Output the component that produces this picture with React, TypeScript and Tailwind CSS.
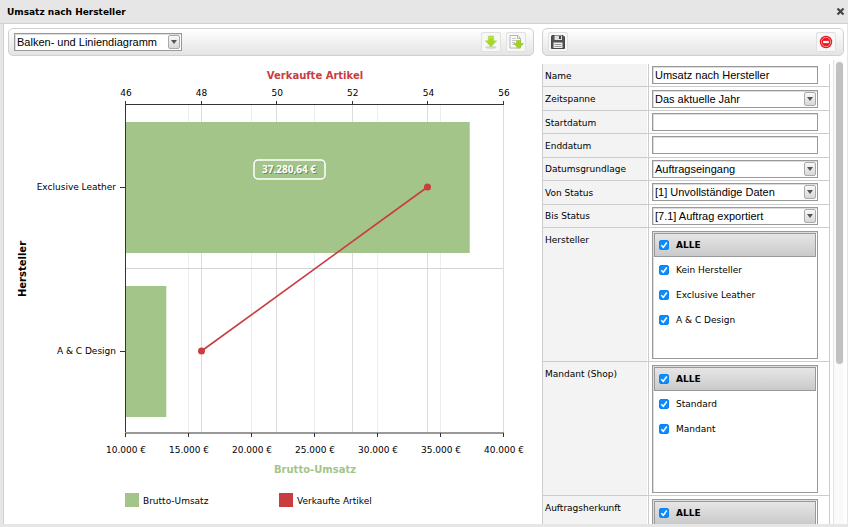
import { useState, type ReactNode } from 'react';

const SANS = "font-['DejaVu_Sans','Verdana',sans-serif]";
const FIELD =
  "w-full h-[18px] appearance-none rounded-none border border-[#999] bg-white px-[2px] py-0 text-[11px] leading-4 text-black font-['Liberation_Sans','Arial',sans-serif] shadow-[inset_1px_1px_0_#ddd] outline-none";

function SelectBox({ id, label, options }: { id: string; label?: string; options: string[] }) {
  return (
    <div className="relative flex w-full items-center">
      <select id={id} aria-label={label} className={FIELD}>
        {options.map((o) => (
          <option key={o}>{o}</option>
        ))}
      </select>
      <span className="pointer-events-none absolute right-[2px] flex h-[14px] w-[12px] items-center justify-center rounded-[2px] border border-[#aaa] bg-linear-to-b from-[#f8f8f8] to-[#d8d8d8]">
        <svg width="6" height="4" viewBox="0 0 6 4">
          <path d="M0 0h6L3 4z" fill="#555" />
        </svg>
      </span>
    </div>
  );
}

function ToolButton({ label, children }: { label: string; children: ReactNode }) {
  return (
    <button
      type="button"
      aria-label={label}
      className="flex size-5 items-center justify-center rounded-[2px] border border-[#e0e0e0] bg-[#f7f7f7]"
    >
      {children}
    </button>
  );
}

function Toolbar({ children }: { children: ReactNode }) {
  return (
    <div className="flex h-7 shrink-0 items-center rounded-[5px] border border-[#d0d0d0] bg-linear-to-b from-white to-[#e4e4e4] px-[5px]">
      {children}
    </div>
  );
}

function DownloadIcon() {
  return (
    <svg width="14" height="16" viewBox="0 0 14 16">
      <ellipse cx="7" cy="13.4" rx="5.5" ry="1.4" fill="#d4d4d4" />
      <path d="M4.300 2h5.400v4.800h3.100L7 12.800 1.200 6.800h3.100z" fill="#a6d724" stroke="#b4dc52" strokeWidth=".6" strokeLinejoin="round" />
      <path d="M4.800 2.500h4.400v2H4.800z" fill="#c3e858" opacity=".7" />
    </svg>
  );
}

function ExportIcon() {
  return (
    <svg width="16" height="16" viewBox="0 0 16 16">
      <path d="M2 1.500h8l2.500 3v9.500H2z" fill="#fafafa" stroke="#b4b4b4" />
      <path d="M9.500 1.500v3h3" fill="none" stroke="#b4b4b4" />
      <path d="M4 4.500h4M4 6.500h4M4 8.500h3M4 10.500h3" stroke="#c8c8c8" />
      <path d="M8.500 6.500h4v3h3L10.500 14.500 5.800 9.500h2.700z" fill="#a0d41e" stroke="#8cc41c" strokeWidth=".6" />
    </svg>
  );
}

function SaveIcon() {
  return (
    <svg width="16" height="16" viewBox="0 0 16 16">
      <path d="M2 1.500h11l1.500 1.500v11.500H1.500V2z" fill="#505055" stroke="#47474b" strokeLinejoin="round" />
      <path d="M4.500 1.500h7.500v4.500H4.500z" fill="#dedede" />
      <path d="M9 2h2v3H9z" fill="#444" />
      <path d="M3.500 8.500h9v5.500h-9z" fill="#efefef" />
      <path d="M4.500 10.500h7M4.500 12.500h7" stroke="#999" />
    </svg>
  );
}

function RemoveIcon() {
  return (
    <svg width="14" height="14" viewBox="0 0 14 14">
      <circle cx="7" cy="7" r="6.200" fill="#e3121c" />
      <circle cx="7" cy="7" r="4.700" fill="#f01822" stroke="#ffb5b5" strokeWidth=".8" />
      <rect x="4.200" y="5.900" width="5.600" height="2.200" fill="#fff" />
    </svg>
  );
}

const PLOT = { left: 117, right: 495, top: 48, bottom: 376 };
const CATEGORIES = [
  { name: 'Exclusive Leather', revenue: 37280.64, sold: 54 },
  { name: 'A & C Design', revenue: 13200, sold: 48 },
];
const REVENUE_TICKS = [10000, 15000, 20000, 25000, 30000, 35000, 40000];
const SOLD_TICKS = [46, 48, 50, 52, 54, 56];
const plotWidth = PLOT.right - PLOT.left;
const revenueX = (v: number) => PLOT.left + ((v - 10000) / 30000) * plotWidth;
const soldX = (v: number) => PLOT.left + ((v - 46) / 10) * plotWidth;
const band = (PLOT.bottom - PLOT.top) / 2;
const centerY = (i: number) => PLOT.top + 1 + band * (i + 0.5);
const snap = (v: number) => Math.round(v) + 0.5;
const euro = (v: number) => `${v / 1000}.000 €`;

function Chart() {
  return (
    <svg
      viewBox="0 0 526 466"
      role="img"
      aria-label="Umsatz nach Hersteller"
      className="w-full font-['DejaVu_Sans','Verdana',sans-serif] text-[9px]"
    >
      {REVENUE_TICKS.slice(1).map((t) => (
        <path key={t} d={`M${snap(revenueX(t))} ${PLOT.top}V${PLOT.bottom}`} stroke="#ededed" />
      ))}
      {SOLD_TICKS.slice(1).map((t) => (
        <path key={t} d={`M${snap(soldX(t))} ${PLOT.top}V${PLOT.bottom}`} stroke="#dcdcdc" />
      ))}
      <path d={`M${PLOT.left} ${snap(PLOT.top + band)}H${PLOT.right}`} stroke="#d4d4d4" />
      {CATEGORIES.map((c, i) => (
        <g key={c.name}>
          <rect
            x={PLOT.left}
            y={centerY(i) - 65}
            width={revenueX(c.revenue) - PLOT.left + 1}
            height="131"
            fill="#a4c58a"
          />
          <path d={`M${PLOT.left - 5} ${snap(centerY(i))}h5`} stroke="#333" />
          <text x="108" y={centerY(i) + 3} textAnchor="end">
            {c.name}
          </text>
        </g>
      ))}
      <path d={`M${PLOT.left + 0.5} ${PLOT.top}V${PLOT.bottom}`} stroke="#333" />
      <path d={`M${PLOT.left} ${PLOT.top + 0.5}H${PLOT.right + 1}`} stroke="#333" />
      <path d={`M${PLOT.left} ${PLOT.bottom + 1}H${PLOT.right + 1}`} stroke="#999" strokeWidth="2" />
      {SOLD_TICKS.map((t) => (
        <g key={t}>
          <path d={`M${snap(soldX(t))} 45v4`} stroke="#333" />
          <text x={soldX(t) + 1} y="40" textAnchor="middle">
            {t}
          </text>
        </g>
      ))}
      {REVENUE_TICKS.map((t) => (
        <g key={t}>
          <path d={`M${snap(revenueX(t))} 377v4`} stroke="#333" />
          <text x={revenueX(t) + 1} y="397" textAnchor="middle">
            {euro(t)}
          </text>
        </g>
      ))}
      <path
        d={`M${snap(soldX(54))} ${centerY(0)}L${snap(soldX(48))} ${centerY(1)}`}
        stroke="#c93c40"
        strokeWidth="1.600"
      />
      {CATEGORIES.map((c, i) => (
        <circle key={c.name} cx={snap(soldX(c.sold))} cy={centerY(i)} r="3.500" fill="#c93c40" />
      ))}
      <rect x="246" y="104" width="71" height="19" rx="4" fill="none" stroke="#fff" strokeWidth="1.500" />
      <g className="font-['Open_Sans','Verdana',sans-serif] text-[10px] font-bold">
        <text x="282" y="118" textAnchor="middle" fill="#6d8a58">
          37.280,64 €
        </text>
        <text x="281" y="117" textAnchor="middle" fill="#fff" aria-hidden="true">
          37.280,64 €
        </text>
      </g>
      <g className="text-[10px] font-bold" textAnchor="middle">
        <text x="307" y="23" fill="#c93c40">
          Verkaufte Artikel
        </text>
        <text x="307" y="417" fill="#a4c58a">
          Brutto-Umsatz
        </text>
        <text transform="translate(18 213) rotate(-90)">Hersteller</text>
      </g>
      <rect x="117" y="437" width="14" height="14" fill="#a4c58a" />
      <text x="135" y="448">
        Brutto-Umsatz
      </text>
      <rect x="271" y="437" width="14" height="14" fill="#c93c40" />
      <text x="289" y="448">
        Verkaufte Artikel
      </text>
    </svg>
  );
}

function Check({ label, bold }: { label: string; bold?: boolean }) {
  const [on, setOn] = useState(true);
  return (
    <label className={bold ? 'flex items-center gap-[7px] font-bold' : 'flex items-center gap-[7px]'}>
      <span className="grid size-[10px]">
        <input
          type="checkbox"
          checked={on}
          onChange={() => setOn(!on)}
          className="col-start-1 row-start-1 size-[10px] appearance-none rounded-[2px] border border-[#999] bg-white checked:border-[#0a84f5] checked:bg-[#0a8cff]"
        />
        {on && (
          <svg viewBox="0 0 10 10" className="pointer-events-none col-start-1 row-start-1 size-[10px]">
            <path d="M2.300 5.200l2 2.100 3.500-4.800" fill="none" stroke="#fff" strokeWidth="1.500" />
          </svg>
        )}
      </span>
      {label}
    </label>
  );
}

function CheckList({ items }: { items: string[] }) {
  return (
    <div className="h-32 w-full border border-[#999] bg-white p-px shadow-[inset_1px_1px_0_#ddd]">
      <div className="flex h-6 items-center border border-[#999] bg-linear-to-b from-[#e6e6e6] to-[#cacaca] px-1">
        <Check label="ALLE" bold />
      </div>
      <ul className="px-[5px] pt-px">
        {items.map((i) => (
          <li key={i} className="flex h-[25px] items-center">
            <Check label={i} />
          </li>
        ))}
      </ul>
    </div>
  );
}

function Row({ id, label, tall, children }: { id?: string; label: string; tall?: boolean; children: ReactNode }) {
  return (
    <div
      className={
        tall
          ? 'flex h-[134px] shrink-0 border-b border-[#ccc]'
          : 'flex min-h-0 flex-1 items-stretch border-b border-[#ccc]'
      }
    >
      <div className={tall ? 'w-[104px] bg-[#f3f3f3] px-[2px] pt-[6px]' : 'flex w-[104px] items-center bg-[#f3f3f3] px-[2px] pt-px'}>
        {id ? <label htmlFor={id}>{label}</label> : <span>{label}</span>}
      </div>
      <div className="ml-px flex flex-1 items-center border-l border-[#ccc] pr-[11px] pl-[3px]">{children}</div>
    </div>
  );
}

export default function App() {
  return (
    <div className={`flex h-screen flex-col overflow-hidden bg-[#e6e6e6] text-[9px] leading-3 text-black ${SANS}`}>
      <header className="flex h-6 shrink-0 items-center justify-between border-b border-[#d0d0d0] pr-[3px] pl-[7px]">
        <h1 className="text-[9px] font-bold">Umsatz nach Hersteller</h1>
        <button type="button" aria-label="Schließen">
          <svg width="9" height="9" viewBox="0 0 9 9">
            <path d="M1.500 1.500l6 6M7.500 1.500l-6 6" stroke="#444" strokeWidth="2.200" />
          </svg>
        </button>
      </header>
      <main className="mr-px mb-[3px] ml-[3px] flex min-h-0 flex-1 gap-2 border-l border-[#d0d0d0] bg-white pt-1 pr-[3px] pl-1">
        <section className="flex min-w-0 flex-1 flex-col">
          <Toolbar>
            <div className="flex w-[168px] pb-px">
              <SelectBox id="diagramm" label="Diagrammtyp" options={['Balken- und Liniendiagramm', 'Liniendiagramm']} />
            </div>
            <div className="ml-auto flex gap-[5px] pr-[2px]">
              <ToolButton label="Herunterladen">
                <DownloadIcon />
              </ToolButton>
              <ToolButton label="Exportieren">
                <ExportIcon />
              </ToolButton>
            </div>
          </Toolbar>
          <Chart />
        </section>
        <section className="flex w-[302px] flex-col">
          <Toolbar>
            <ToolButton label="Speichern">
              <SaveIcon />
            </ToolButton>
            <div className="ml-auto pr-[2px]">
              <ToolButton label="Entfernen">
                <RemoveIcon />
              </ToolButton>
            </div>
          </Toolbar>
          <div className="mt-1 flex min-h-0 flex-1 justify-between">
            <form className="mt-1 flex w-[288px] flex-col overflow-hidden border-x border-[#ccc]">
              <div className="flex h-[164px] shrink-0 flex-col">
                <Row id="name" label="Name">
                  <input id="name" className={FIELD} defaultValue="Umsatz nach Hersteller" />
                </Row>
                <Row id="zeit" label="Zeitspanne">
                  <SelectBox id="zeit" options={['Das aktuelle Jahr']} />
                </Row>
                <Row id="start" label="Startdatum">
                  <input id="start" className={FIELD} />
                </Row>
                <Row id="ende" label="Enddatum">
                  <input id="ende" className={FIELD} />
                </Row>
                <Row id="basis" label="Datumsgrundlage">
                  <SelectBox id="basis" options={['Auftragseingang']} />
                </Row>
                <Row id="von" label="Von Status">
                  <SelectBox id="von" options={['[1] Unvollständige Daten']} />
                </Row>
                <Row id="bis" label="Bis Status">
                  <SelectBox id="bis" options={['[7.1] Auftrag exportiert']} />
                </Row>
              </div>
              <Row tall label="Hersteller">
                <CheckList items={['Kein Hersteller', 'Exclusive Leather', 'A & C Design']} />
              </Row>
              <Row tall label="Mandant (Shop)">
                <CheckList items={['Standard', 'Mandant']} />
              </Row>
              <Row tall label="Auftragsherkunft">
                <CheckList items={[]} />
              </Row>
            </form>
            <div className="flex w-[11px] justify-center border-l border-[#e4e4e4] bg-[#fafafa] pt-[2px]">
              <div className="h-[302px] w-[7px] rounded-full bg-[#c1c1c1]" />
            </div>
          </div>
        </section>
      </main>
    </div>
  );
}
